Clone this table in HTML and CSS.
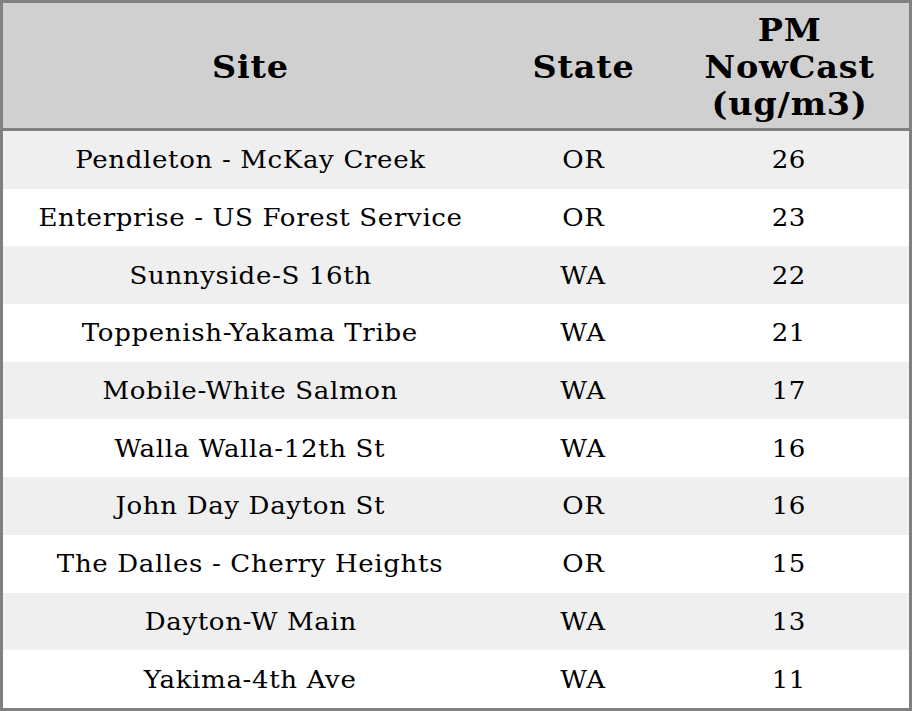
FILE: index.html
```html
<!DOCTYPE html>
<html>
<head>
<meta charset="utf-8">
<link rel="stylesheet" href="styles.css">
</head>
<body>
<table class="aq-table">
  <colgroup>
    <col class="col-site">
    <col class="col-state">
    <col class="col-pm">
  </colgroup>
  <thead>
    <tr class="head-row">
      <th><span class="txt">Site</span></th>
      <th><span class="txt">State</span></th>
      <th><span class="txt">PM<br>NowCast<br>(ug/m3)</span></th>
    </tr>
  </thead>
  <tbody>
    <tr class="row"><td><span class="txt">Pendleton - McKay Creek</span></td><td><span class="txt">OR</span></td><td><span class="txt">26</span></td></tr>
    <tr class="row"><td><span class="txt">Enterprise - US Forest Service</span></td><td><span class="txt">OR</span></td><td><span class="txt">23</span></td></tr>
    <tr class="row"><td><span class="txt">Sunnyside-S 16th</span></td><td><span class="txt">WA</span></td><td><span class="txt">22</span></td></tr>
    <tr class="row"><td><span class="txt">Toppenish-Yakama Tribe</span></td><td><span class="txt">WA</span></td><td><span class="txt">21</span></td></tr>
    <tr class="row"><td><span class="txt">Mobile-White Salmon</span></td><td><span class="txt">WA</span></td><td><span class="txt">17</span></td></tr>
    <tr class="row"><td><span class="txt">Walla Walla-12th St</span></td><td><span class="txt">WA</span></td><td><span class="txt">16</span></td></tr>
    <tr class="row"><td><span class="txt">John Day Dayton St</span></td><td><span class="txt">OR</span></td><td><span class="txt">16</span></td></tr>
    <tr class="row"><td><span class="txt">The Dalles - Cherry Heights</span></td><td><span class="txt">OR</span></td><td><span class="txt">15</span></td></tr>
    <tr class="row"><td><span class="txt">Dayton-W Main</span></td><td><span class="txt">WA</span></td><td><span class="txt">13</span></td></tr>
    <tr class="row"><td><span class="txt">Yakima-4th Ave</span></td><td><span class="txt">WA</span></td><td><span class="txt">11</span></td></tr>
  </tbody>
</table>
</body>
</html>
```
FILE: styles.css
```css
html, body {
  margin: 0;
  padding: 0;
  background: #ffffff;
}

.aq-table {
  width: 912px;
  height: 711px;
  border-collapse: separate;
  border-spacing: 0;
  border: 3px solid #808080;
  font-family: "DejaVu Serif", serif;
  color: #000;
  table-layout: fixed;
}

.col-site { width: 494px; }
.col-state { width: 172px; }
.col-pm { width: 240px; }

.txt {
  display: inline-block;
  white-space: nowrap;
  transform-origin: center center;
}

.head-row th {
  height: 124px;
  padding: 1px 0 0 0.8px;
  background: #d0d0d0;
  border-bottom: 3px solid #808080;
  font-size: 32.5px;
  font-weight: bold;
  letter-spacing: 0.8px;
  line-height: 37px;
  text-align: center;
  vertical-align: middle;
}

.head-row .txt {
  transform: scaleX(1.03);
}

.row td {
  height: 56.6px;
  padding: 1px 0 0 0.6px;
  font-size: 24px;
  letter-spacing: 0.6px;
  text-align: center;
  vertical-align: middle;
}

.row .txt {
  transform: scaleX(1.085);
}

.row:nth-child(odd) td {
  background: #efefef;
}
```
